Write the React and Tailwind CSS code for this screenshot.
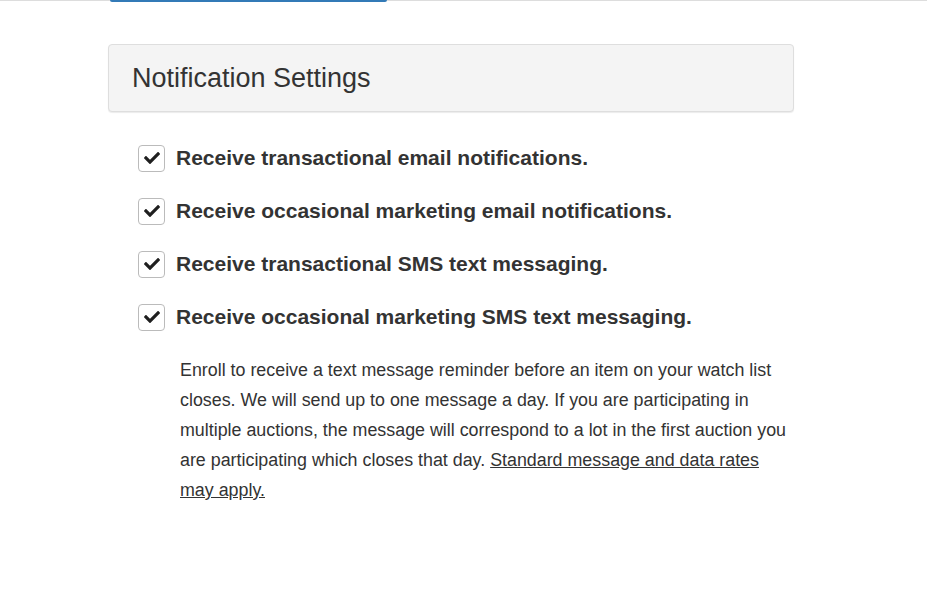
import React from "react";

const options = [
  "Receive transactional email notifications.",
  "Receive occasional marketing email notifications.",
  "Receive transactional SMS text messaging.",
  "Receive occasional marketing SMS text messaging.",
];

const CheckIcon = () => (
  <svg viewBox="0 0 512 512" className="w-[16px] h-[16px]" fill="#1f1f1f">
    <path d="M173.9 439.4l-166.4-166.4c-10-10-10-26.2 0-36.2l36.2-36.2c10-10 26.2-10 36.2 0L192 312.7 432.1 72.6c10-10 26.2-10 36.2 0l36.2 36.2c10 10 10 26.2 0 36.2l-294.4 294.4c-10 10-26.2 10-36.2 0z" />
  </svg>
);

const App = () => {
  return (
    <div
      className="min-h-[589px] bg-white text-[#333]"
      style={{ fontFamily: '"Liberation Sans", Arial, sans-serif' }}
    >
      {/* tab strip */}
      <div className="border-t border-[#ddd]">
        <div className="ml-[110px] w-[277px] h-[2px] -mt-px bg-[#337ab7] rounded-b"></div>
      </div>

      <div className="ml-[108px] w-[686px] pt-[42px]">
        <div className="bg-[#f4f4f4] border border-[#dedede] rounded shadow-[0_1px_1px_rgba(0,0,0,0.08)] h-[68px] flex items-center px-[23px]">
          <h2 className="text-[27px] leading-none">Notification Settings</h2>
        </div>

        <div className="pl-[30px] pt-[33px]">
          {options.map((label) => (
            <label key={label} className="flex items-center gap-[11px] h-[26px] mb-[27px]">
              <span className="w-[27px] h-[27px] border border-[#bbb] rounded-[4px] bg-white flex items-center justify-center">
                <CheckIcon />
              </span>
              <span className="font-bold text-[21px] text-[#333]">{label}</span>
            </label>
          ))}

          <p className="ml-[42px] -mt-[2px] w-[610px] text-[17.85px] leading-[30px] text-[#333]">
            Enroll to receive a text message reminder before an item on your watch list
            closes. We will send up to one message a day. If you are participating in
            multiple auctions, the message will correspond to a lot in the first auction you
            are participating which closes that day.{" "}
            <a href="#" className="underline">Standard message and data rates may apply.</a>
          </p>
        </div>
      </div>
    </div>
  );
};

export default App;
